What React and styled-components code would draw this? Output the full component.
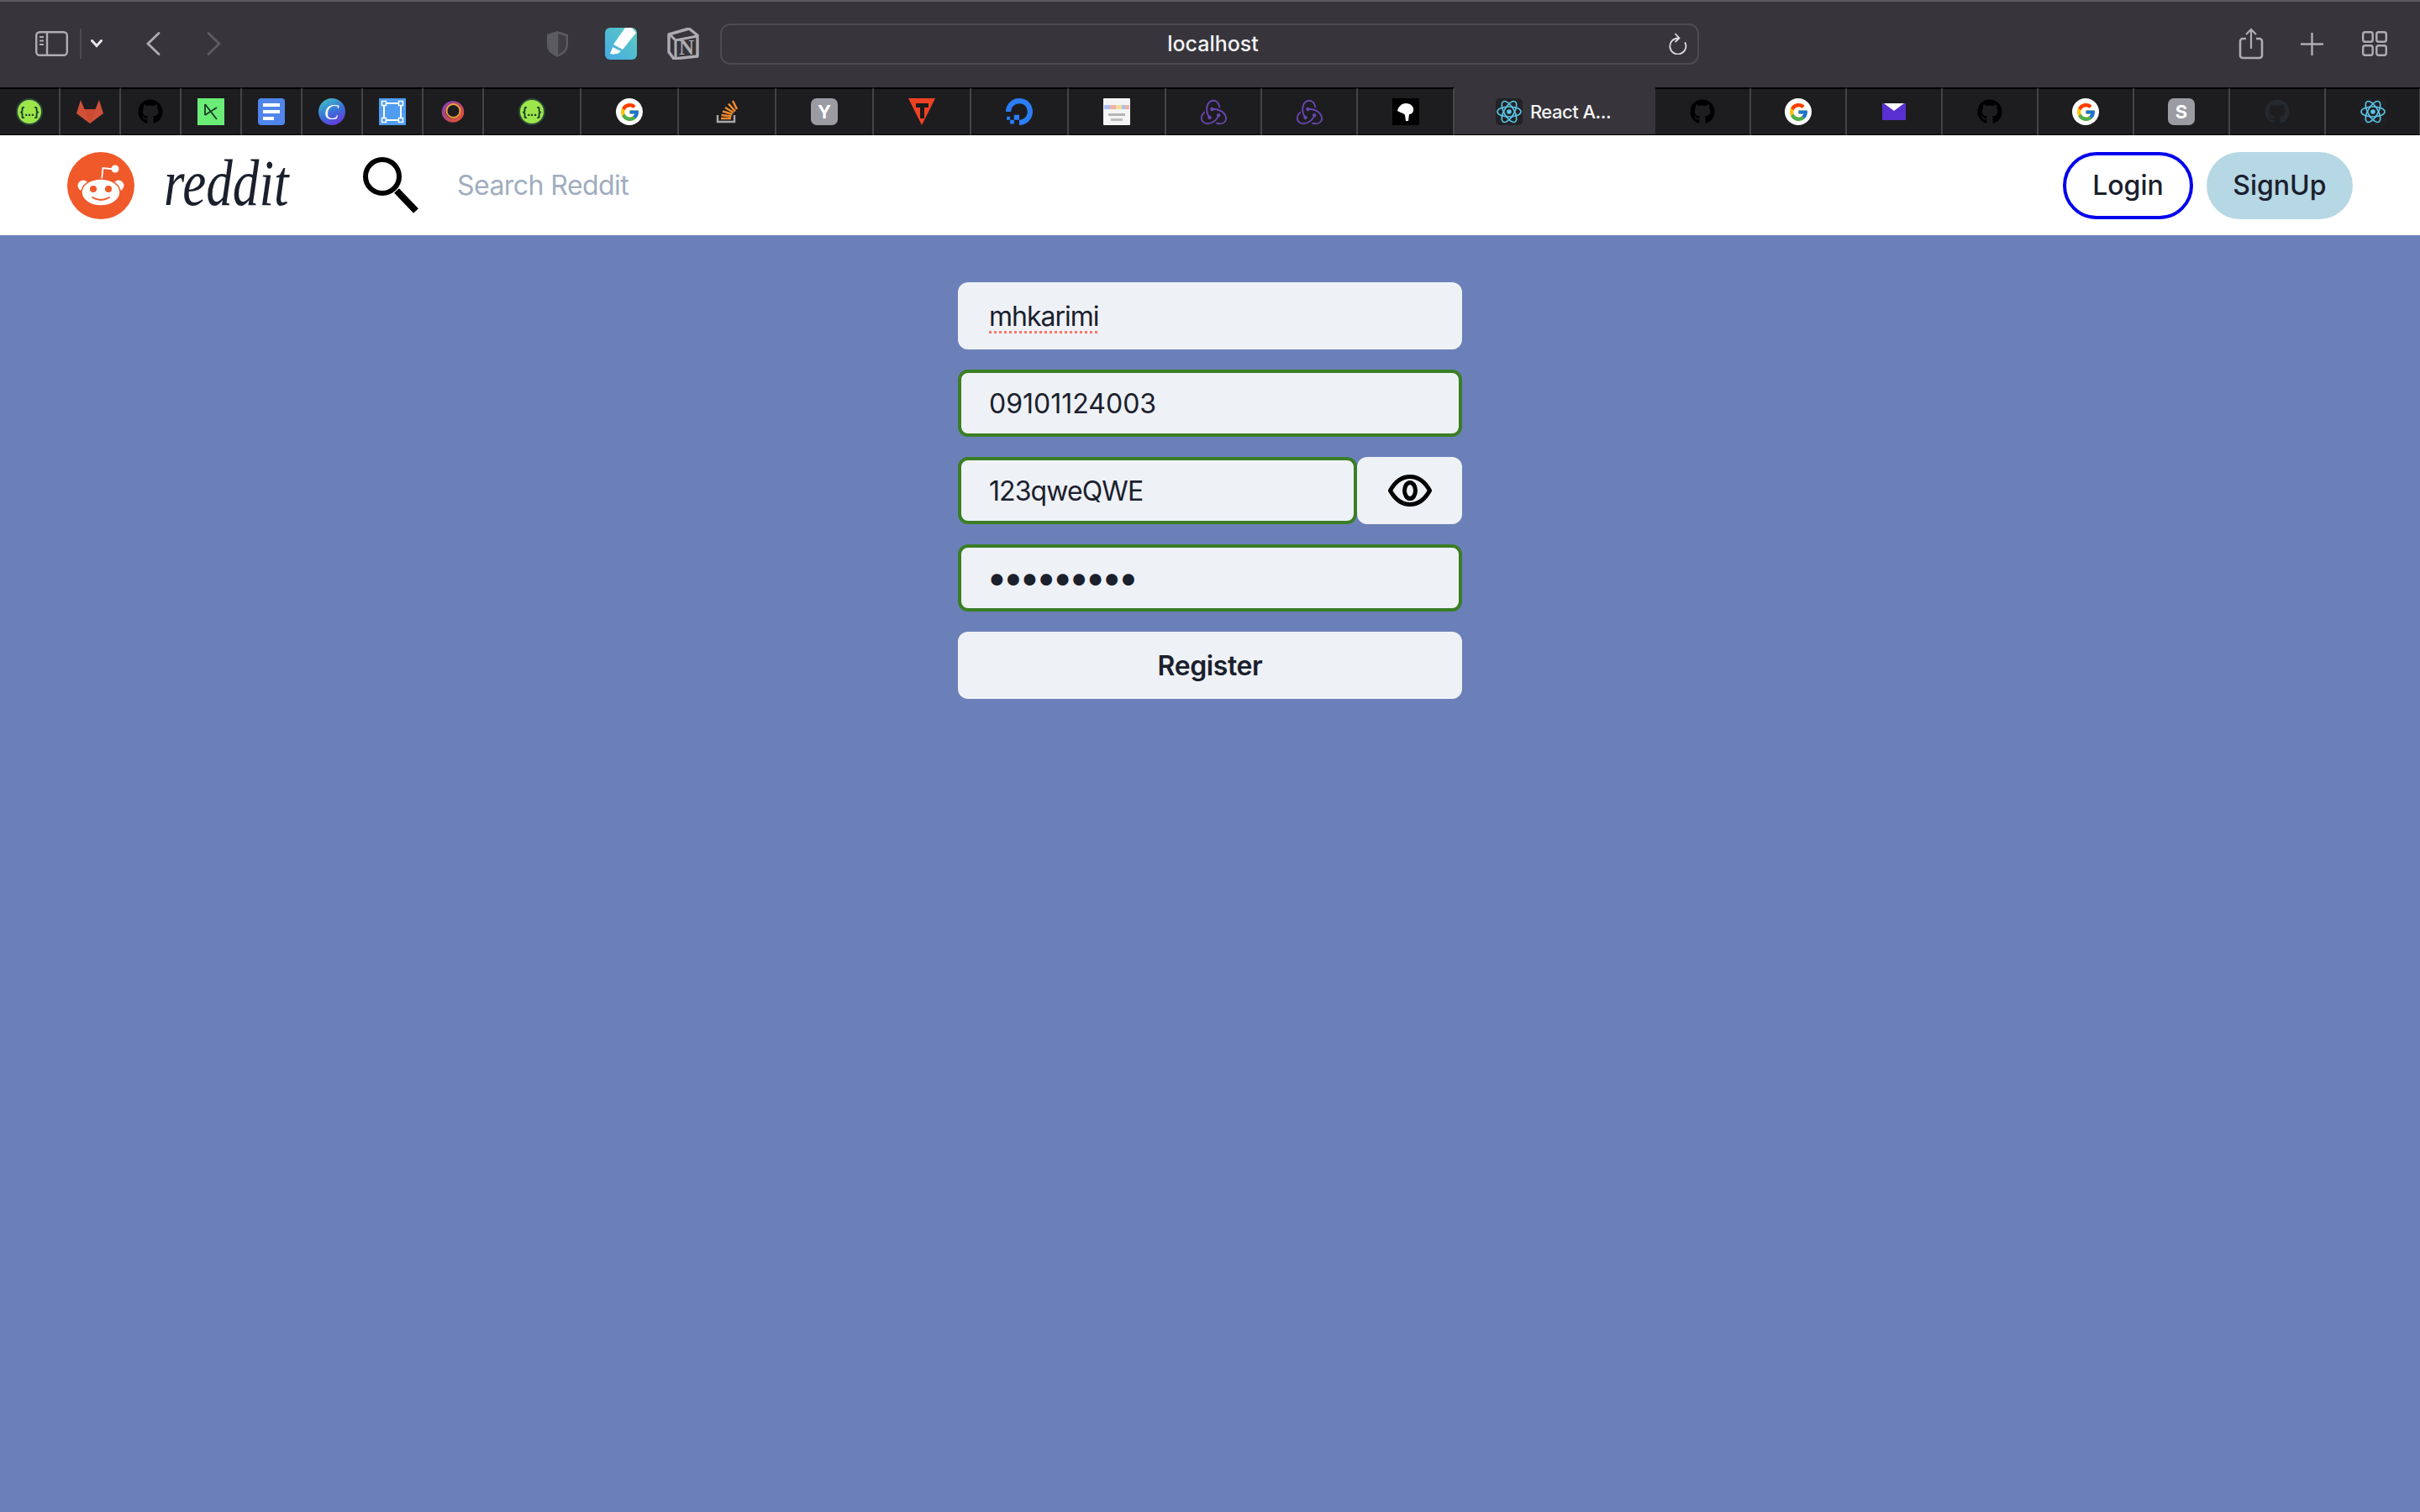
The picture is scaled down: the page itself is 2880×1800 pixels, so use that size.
import React from 'react';
import styled, { createGlobalStyle } from 'styled-components';
import { FaGithub } from 'react-icons/fa';
import { SiRedux, SiDigitalocean } from 'react-icons/si';
import { FcGoogle } from 'react-icons/fc';

const GlobalStyle = createGlobalStyle`
    html, body {
        margin: 0;
        padding: 0;
        background-color: #6b80b9;
    }
    * {
        box-sizing: border-box;
    }
`;

const Page = styled.div`
    width: 2880px;
    height: 1800px;
    display: flex;
    flex-direction: column;
    font-family: Inter, "Liberation Sans", sans-serif;
    color: #1a202c;
    background-color: #6b80b9;
    overflow: hidden;
`;

const Toolbar = styled.div`
    display: grid;
    grid-template-columns: 857px 1165px 1fr;
    align-items: center;
    height: 104px;
    flex: none;
    background-color: #37353b;
    box-shadow: inset 0 2px 0 #5c5b60;
`;

const LeftControls = styled.div`
    display: flex;
    align-items: center;
    padding-left: 42px;
`;

const RightControls = styled.div`
    display: flex;
    align-items: center;
    padding-left: 642px;
`;

const ToolIcon = styled.svg`
    display: block;
    flex: none;
    margin-left: ${(p) => p.$ml || 0}px;
`;

const AddressBar = styled.div`
    display: grid;
    grid-template-columns: 1fr auto 1fr;
    align-items: center;
    height: 49px;
    padding: 0 12px 0 20px;
    border: 2px solid #4c4b50;
    border-radius: 12px;
`;

const AddressText = styled.span`
    grid-column: 2;
    font-size: 25px;
    font-weight: 500;
    color: #f4f4f5;
`;

const Reload = styled.svg`
    grid-column: 3;
    justify-self: end;
    display: block;
`;

const TabStrip = styled.div`
    display: flex;
    height: 57px;
    flex: none;
    background-color: #1d1d20;
`;

const Tab = styled.div`
    display: flex;
    align-items: center;
    justify-content: center;
    gap: 9px;
    width: ${(p) => p.$w}px;
    flex: none;
    padding-right: ${(p) => (p.$active ? 4 : 0)}px;
    background-color: ${(p) => (p.$active ? '#37353b' : 'transparent')};
    border-top: 2px solid ${(p) => (p.$active ? '#37353b' : '#000')};
    border-bottom: 1px solid #000;
    border-right: ${(p) => (p.$active ? 'none' : '2px solid #444447')};
`;

const TabTitle = styled.span`
    font-size: 22px;
    font-weight: 500;
    letter-spacing: -0.5px;
    color: #f4f4f5;
    white-space: nowrap;
`;

const Favicon = styled.span`
    display: flex;
    align-items: center;
    justify-content: center;
    width: 32px;
    height: 32px;
    flex: none;
`;

const LetterIcon = styled.span`
    display: flex;
    align-items: center;
    justify-content: center;
    width: 32px;
    height: 32px;
    border-radius: 7px;
    background-color: #9b9ba3;
    color: #fff;
    font-size: 22px;
    font-weight: 700;
`;

const GoogleBadge = styled.span`
    display: flex;
    align-items: center;
    justify-content: center;
    width: 32px;
    height: 32px;
    border-radius: 50%;
    background-color: #fff;
`;

const Navbar = styled.header`
    display: flex;
    align-items: center;
    height: 119px;
    flex: none;
    padding: 0 80px;
    background-color: #fff;
`;

const Wordmark = styled.span`
    display: block;
    width: 151px;
    margin-left: 35px;
    padding-bottom: 5px;
    font-family: "Liberation Serif", serif;
    font-style: italic;
    font-size: 78px;
    line-height: 1;
    transform: scaleX(0.81);
    transform-origin: left center;
    white-space: nowrap;
`;

const SearchGlyph = styled.svg`
    display: block;
    flex: none;
    margin-left: 86px;
`;

const SearchInput = styled.input`
    flex: 1;
    margin-left: 43px;
    border: none;
    outline: none;
    background: transparent;
    font-family: inherit;
    font-size: 32px;
    letter-spacing: -0.55px;
    color: #1a202c;
    &::placeholder {
        color: #a0aec0;
        opacity: 1;
    }
`;

const PillButton = styled.button`
    height: 80px;
    padding: 0 ${(p) => p.$pad}px;
    margin-left: ${(p) => p.$ml || 0}px;
    border: ${(p) => (p.$outline ? '4px solid #0000ee' : 'none')};
    border-radius: 40px;
    background-color: ${(p) => (p.$outline ? '#fff' : '#b6d7e4')};
    font-family: inherit;
    font-size: 32px;
    font-weight: 500;
    color: #1a202c;
`;

const Form = styled.form`
    display: flex;
    flex-direction: column;
    gap: 24px;
    width: 600px;
    margin: 56px auto 0;
`;

const Row = styled.div`
    display: flex;
`;

const Field = styled.input`
    display: flex;
    align-items: center;
    width: 100%;
    height: 80px;
    padding: 0 ${(p) => (p.$valid ? 33 : 37)}px;
    padding-bottom: ${(p) => (p.$secret ? 3 : 0)}px;
    border: ${(p) => (p.$valid ? '4px solid #3a7e25' : 'none')};
    border-radius: 12px;
    outline: none;
    background-color: #eef1f6;
    font-family: inherit;
    font-size: ${(p) => (p.$secret ? 44 : 32)}px;
    letter-spacing: ${(p) => p.$spacing || 0}px;
    text-indent: ${(p) => (p.$secret ? -3 : 0)}px;
    color: #1a202c;
`;

const Misspelt = styled.span`
    text-decoration: underline dotted #f8776a 3px;
    text-underline-offset: 6px;
`;

const EyeButton = styled.button`
    display: flex;
    align-items: center;
    justify-content: center;
    width: 125px;
    height: 80px;
    flex: none;
    border: none;
    border-radius: 12px;
    background-color: #eef1f6;
`;

const SubmitButton = styled.button`
    width: 100%;
    height: 80px;
    border: none;
    border-radius: 12px;
    background-color: #eef1f6;
    font-family: inherit;
    font-size: 32px;
    font-weight: 600;
    letter-spacing: -0.4px;
    color: #1a202c;
`;

const SwaggerIcon = () => (
    <svg width="32" height="32" viewBox="0 0 32 32">
        <circle cx="16" cy="16" r="15" fill="#9de64a" stroke="#2c4a3a" strokeWidth="2" />
        <text x="16" y="20.500" textAnchor="middle" fontFamily="Liberation Sans, sans-serif" fontWeight="700" fontSize="14" fill="#173a2a">{'{...}'}</text>
    </svg>
);

const GitlabIcon = () => (
    <svg width="32" height="28" viewBox="0 0 32 28">
        <path d="M0 16L5 0l4.500 11h13L27 0l5 16-16 12z" fill="#d1503a" />
        <path d="M9.500 11h13L16 28z" fill="#cc4a30" />
    </svg>
);

const DkIcon = () => (
    <svg width="32" height="32" viewBox="0 0 32 32">
        <rect width="32" height="32" fill="#6bec77" />
        <path d="M9 7v13M9 7l14 18M9 20l14-9" fill="none" stroke="#173a26" strokeWidth="1.800" />
    </svg>
);

const DocsIcon = () => (
    <svg width="32" height="32" viewBox="0 0 32 32">
        <rect width="32" height="32" rx="4" fill="#5085ec" />
        <rect x="6" y="6" width="20" height="4" fill="#fff" />
        <rect x="6" y="14" width="20" height="4" fill="#fff" />
        <rect x="6" y="22" width="13" height="4" fill="#fff" />
    </svg>
);

const CanvaIcon = () => (
    <svg width="32" height="32" viewBox="0 0 32 32">
        <defs>
            <linearGradient id="canva" x1="0.2" y1="0" x2="0.7" y2="1">
                <stop offset="0" stopColor="#3fc0c4" />
                <stop offset="0.55" stopColor="#3a6fd8" />
                <stop offset="1" stopColor="#6a35e0" />
            </linearGradient>
        </defs>
        <circle cx="16" cy="16" r="16" fill="url(#canva)" />
        <text x="15.500" y="24.500" textAnchor="middle" fontFamily="Liberation Serif, serif" fontStyle="italic" fontSize="26" fill="#fff">C</text>
    </svg>
);

const FrameIcon = () => (
    <svg width="32" height="32" viewBox="0 0 32 32">
        <rect width="32" height="32" fill="#4f9cf0" />
        <rect x="6" y="6" width="20" height="20" fill="none" stroke="#fff" strokeWidth="2" />
        {[6, 26].map((x) => [6, 26].map((y) => (
            <rect key={`${x}-${y}`} x={x - 2.5} y={y - 2.5} width="5" height="5" fill="#4f9cf0" stroke="#fff" strokeWidth="1.5" />
        )))}
    </svg>
);

const OrbitIcon = () => (
    <svg width="32" height="32" viewBox="0 0 32 32">
        <defs>
            <linearGradient id="orbit" x1="0" y1="0" x2="1" y2="1">
                <stop offset="0" stopColor="#8a3fb5" />
                <stop offset="1" stopColor="#e8532a" />
            </linearGradient>
        </defs>
        <ellipse cx="16" cy="16" rx="11" ry="10.500" fill="none" stroke="url(#orbit)" strokeWidth="4.500" />
        <ellipse cx="16.500" cy="15" rx="8" ry="8" fill="none" stroke="#eda23a" strokeWidth="2" />
    </svg>
);

const StackIcon = () => (
    <svg width="32" height="32" viewBox="0 0 32 32">
        <path d="M5 20v8h20v-8" fill="none" stroke="#a8a8ac" strokeWidth="2.400" />
        <path d="M9 24h12M9.500 20l12 1.500M11 15.500l11.500 3.500M14 11l10 6M18 6.500l8 9M23 3l5 10" fill="none" stroke="#ef8a2c" strokeWidth="2.600" />
    </svg>
);

const TriangleIcon = () => (
    <svg width="32" height="32" viewBox="0 0 32 32">
        <path d="M0 0h32L16 32z" fill="#ef4223" />
        <path d="M9 6h15v5h-5v13h-5V11H9z" fill="#1a1a1c" />
    </svg>
);

const SearchCardIcon = () => (
    <svg width="32" height="32" viewBox="0 0 32 32">
        <rect width="32" height="32" rx="1" fill="#f4f4f4" />
        <rect x="1" y="8" width="7" height="5" fill="#a9c0ee" />
        <rect x="8" y="8" width="7" height="5" fill="#eeb3a8" />
        <rect x="15" y="8" width="7" height="5" fill="#f1dc9a" />
        <rect x="22" y="8" width="4" height="5" fill="#a9c0ee" />
        <rect x="26" y="8" width="5" height="5" fill="#eeb3a8" />
        <rect x="6" y="18" width="20" height="3" fill="#b5b5b5" />
        <rect x="9" y="24" width="14" height="3" fill="#bdbdbd" />
    </svg>
);

const BlobIcon = () => (
    <svg width="32" height="32" viewBox="0 0 32 32">
        <rect width="32" height="32" fill="#000" />
        <path d="M6 15c1-5 5-9 10-9 6 0 10 4 9 9-1 3-3 4-5 4l-1 8h-3l-1-7c-2-3-4-2-5-3z" fill="#fff" />
    </svg>
);

const MailIcon = () => (
    <svg width="28" height="20" viewBox="0 0 28 20">
        <rect width="28" height="20" fill="#5a2fd0" />
        <path d="M2 0h24l-12 9z" fill="#fff" />
    </svg>
);

const AtomIcon = ({ dark }) => (
    <svg width="32" height="32" viewBox="0 0 32 32">
        <rect width="32" height="32" rx="5" fill={dark ? '#222326' : '#1f2023'} />
        <g fill="none" stroke="#5cc6e8" strokeWidth="1.600">
            <ellipse cx="16" cy="16" rx="14" ry="6" />
            <ellipse cx="16" cy="16" rx="14" ry="6" transform="rotate(60 16 16)" />
            <ellipse cx="16" cy="16" rx="14" ry="6" transform="rotate(120 16 16)" />
        </g>
        <circle cx="16" cy="16" r="2.800" fill="#5cc6e8" />
    </svg>
);

const Google = () => (
    <GoogleBadge>
        <FcGoogle size={25} />
    </GoogleBadge>
);

const TABS = [
    { w: 72, icon: <SwaggerIcon /> },
    { w: 72, icon: <GitlabIcon /> },
    { w: 72, icon: <FaGithub size={30} color="#000" /> },
    { w: 72, icon: <DkIcon /> },
    { w: 72, icon: <DocsIcon /> },
    { w: 72, icon: <CanvaIcon /> },
    { w: 72, icon: <FrameIcon /> },
    { w: 72, icon: <OrbitIcon /> },
    { w: 116, icon: <SwaggerIcon /> },
    { w: 116, icon: <Google /> },
    { w: 116, icon: <StackIcon /> },
    { w: 116, icon: <LetterIcon>Y</LetterIcon> },
    { w: 116, icon: <TriangleIcon /> },
    { w: 116, icon: <SiDigitalocean size={32} color="#2b7ef5" /> },
    { w: 116, icon: <SearchCardIcon /> },
    { w: 114, icon: <SiRedux size={31} color="#6a45b0" /> },
    { w: 114, icon: <SiRedux size={31} color="#6a45b0" /> },
    { w: 115, icon: <BlobIcon /> },
    { w: 239, icon: <AtomIcon dark />, title: 'React A...', active: true },
    { w: 114, icon: <FaGithub size={30} color="#000" /> },
    { w: 114, icon: <Google /> },
    { w: 114, icon: <MailIcon /> },
    { w: 114, icon: <FaGithub size={30} color="#000" /> },
    { w: 114, icon: <Google /> },
    { w: 114, icon: <LetterIcon>S</LetterIcon> },
    { w: 114, icon: <FaGithub size={30} color="#24292e" /> },
    { w: 113, icon: <AtomIcon /> },
];

function BrowserChrome() {
    return (
        <>
            <Toolbar>
                <LeftControls>
                    <ToolIcon width="39" height="30" viewBox="0 0 39 30">
                        <rect x="1.200" y="1.200" width="36.600" height="27.600" rx="4" fill="none" stroke="#aeadb2" strokeWidth="2.400" />
                        <path d="M14 1v28" stroke="#aeadb2" strokeWidth="2.400" />
                        <path d="M5 7h5M5 11.500h5M5 16h5" stroke="#aeadb2" strokeWidth="1.800" />
                    </ToolIcon>
                    <ToolIcon $ml="14" width="2" height="36" viewBox="0 0 2 36">
                        <rect width="2" height="36" fill="#4c4b50" />
                    </ToolIcon>
                    <ToolIcon $ml="11" width="14" height="10" viewBox="0 0 14 10">
                        <path d="M1.500 1.500L7 7.500l5.500-6" fill="none" stroke="#e8e8ea" strokeWidth="3" strokeLinecap="round" />
                    </ToolIcon>
                    <ToolIcon $ml="52" width="17" height="28" viewBox="0 0 17 28">
                        <path d="M15 1.500L2 14l13 12.500" fill="none" stroke="#aeadb2" strokeWidth="2.800" strokeLinecap="round" />
                    </ToolIcon>
                    <ToolIcon $ml="55" width="17" height="28" viewBox="0 0 17 28">
                        <path d="M2 1.500L15 14 2 26.500" fill="none" stroke="#5c5b60" strokeWidth="2.800" strokeLinecap="round" />
                    </ToolIcon>
                    <ToolIcon $ml="387" width="27" height="33" viewBox="0 0 27 33">
                        <path d="M13.500 1L26 5v13c0 7-6 11-12.500 14C7 29 1 25 1 18V5z" fill="#5c5b60" />
                        <path d="M13.500 3l11 3.500V18c0 6-5 9.500-11 12.500z" fill="#3f3e44" stroke="#5c5b60" strokeWidth="1.500" />
                    </ToolIcon>
                    <ToolIcon $ml="43" width="38" height="38" viewBox="0 0 38 38">
                        <defs>
                            <linearGradient id="markup" x1="0" y1="1" x2="1" y2="0">
                                <stop offset="0" stopColor="#46a9e4" />
                                <stop offset="1" stopColor="#5cccc0" />
                            </linearGradient>
                        </defs>
                        <rect width="38" height="38" rx="6" fill="url(#markup)" />
                        <path d="M24 0h8l5 6-16 20-11-6zM9 23l10 5-4 3H7z" fill="#fff" />
                        <path d="M6 31l2-5 5 3-2 3z" fill="#fff" />
                    </ToolIcon>
                    <ToolIcon $ml="36" width="38" height="38" viewBox="0 0 38 38">
                        <path d="M2 8L26 1l10 8v25L8 37l-6-8z" fill="none" stroke="#aeadb2" strokeWidth="3.400" strokeLinejoin="round" />
                        <path d="M3 8l7 7 26-5M10 15v21" fill="none" stroke="#aeadb2" strokeWidth="3" />
                        <text x="23" y="32" textAnchor="middle" fontFamily="Liberation Serif, serif" fontWeight="700" fontSize="25" fill="#aeadb2">N</text>
                    </ToolIcon>
                </LeftControls>
                <AddressBar>
                    <AddressText>localhost</AddressText>
                    <Reload width="22" height="26" viewBox="0 0 22 26">
                        <path d="M11 6.500A9.500 9.500 0 1 0 19.500 12" fill="none" stroke="#dcdcde" strokeWidth="1.800" strokeLinecap="round" />
                        <path d="M8 1.500l4.500 5-4.500 4" fill="none" stroke="#dcdcde" strokeWidth="1.800" strokeLinecap="round" />
                    </Reload>
                </AddressBar>
                <RightControls>
                    <ToolIcon width="30" height="38" viewBox="0 0 30 38">
                        <path d="M9 13H5a3 3 0 0 0-3 3v17a3 3 0 0 0 3 3h20a3 3 0 0 0 3-3V16a3 3 0 0 0-3-3h-4" fill="none" stroke="#aeadb2" strokeWidth="2.600" />
                        <path d="M15 25V2M9 8l6-6 6 6" fill="none" stroke="#aeadb2" strokeWidth="2.200" />
                    </ToolIcon>
                    <ToolIcon $ml="44" width="27" height="27" viewBox="0 0 27 27">
                        <path d="M13.500 0v27M0 13.500h27" stroke="#aeadb2" strokeWidth="2.400" />
                    </ToolIcon>
                    <ToolIcon $ml="46" width="30" height="30" viewBox="0 0 30 30">
                        <g fill="none" stroke="#aeadb2" strokeWidth="2.400">
                            <rect x="1.200" y="1.200" width="11.500" height="11.500" rx="2.500" />
                            <rect x="17.300" y="1.200" width="11.500" height="11.500" rx="2.500" />
                            <rect x="1.200" y="17.300" width="11.500" height="11.500" rx="2.500" />
                            <rect x="17.300" y="17.300" width="11.500" height="11.500" rx="2.500" />
                        </g>
                    </ToolIcon>
                </RightControls>
            </Toolbar>
            <TabStrip>
                {TABS.map((tab, i) => (
                    <Tab key={i} $w={tab.w} $active={tab.active}>
                        <Favicon>{tab.icon}</Favicon>
                        {tab.title && <TabTitle>{tab.title}</TabTitle>}
                    </Tab>
                ))}
            </TabStrip>
        </>
    );
}

function Logo() {
    return (
        <svg width="80" height="80" viewBox="0 0 80 80" style={{ flex: 'none', display: 'block' }}>
            <circle cx="40" cy="40" r="40" fill="#f0592a" />
            <path d="M41 33l1.500-14 13 1.500" fill="none" stroke="#fff" strokeWidth="1.800" />
            <circle cx="57" cy="20" r="4.500" fill="#fff" />
            <circle cx="19" cy="40" r="6.500" fill="#fff" />
            <circle cx="61" cy="40" r="6.500" fill="#fff" />
            <ellipse cx="40" cy="48" rx="23" ry="16" fill="#fff" stroke="#f0592a" strokeWidth="1.500" />
            <circle cx="31" cy="44" r="4" fill="#f0592a" />
            <circle cx="49" cy="44" r="4" fill="#f0592a" />
            <path d="M30 54c6 4 14 4 20 0" fill="none" stroke="#f0592a" strokeWidth="2" strokeLinecap="round" />
        </svg>
    );
}

export default function App() {
    return (
        <Page>
            <GlobalStyle />
            <BrowserChrome />
            <Navbar>
                <Logo />
                <Wordmark>reddit</Wordmark>
                <SearchGlyph width="67" height="67" viewBox="0 0 67 67">
                    <circle cx="23" cy="23" r="20" fill="none" stroke="#000" strokeWidth="6" />
                    <path d="M40 40l23 24" stroke="#000" strokeWidth="8" />
                </SearchGlyph>
                <SearchInput placeholder="Search Reddit" readOnly />
                <PillButton $outline $pad="31">Login</PillButton>
                <PillButton $pad="31.5" $ml="16">SignUp</PillButton>
            </Navbar>
            <Form>
                <Field as="div" $spacing="-1">
                    <Misspelt>mhkarimi</Misspelt>
                </Field>
                <Field $valid defaultValue="09101124003" />
                <Row>
                    <Field $valid $spacing="-0.9" defaultValue="123qweQWE" />
                    <EyeButton type="button">
                        <svg width="52" height="38" viewBox="0 0 52 38">
                            <path d="M2.500 19C8 9 16 2.500 26 2.500S44 9 49.500 19C44 29 36 35.500 26 35.500S8 29 2.500 19z" fill="none" stroke="#000" strokeWidth="5" />
                            <ellipse cx="26" cy="19" rx="6.500" ry="9.500" fill="none" stroke="#000" strokeWidth="5" />
                        </svg>
                    </EyeButton>
                </Row>
                <Field $valid $secret $spacing="-5.2" type="password" defaultValue="123qweQWE" />
                <SubmitButton type="button">Register</SubmitButton>
            </Form>
        </Page>
    );
}
